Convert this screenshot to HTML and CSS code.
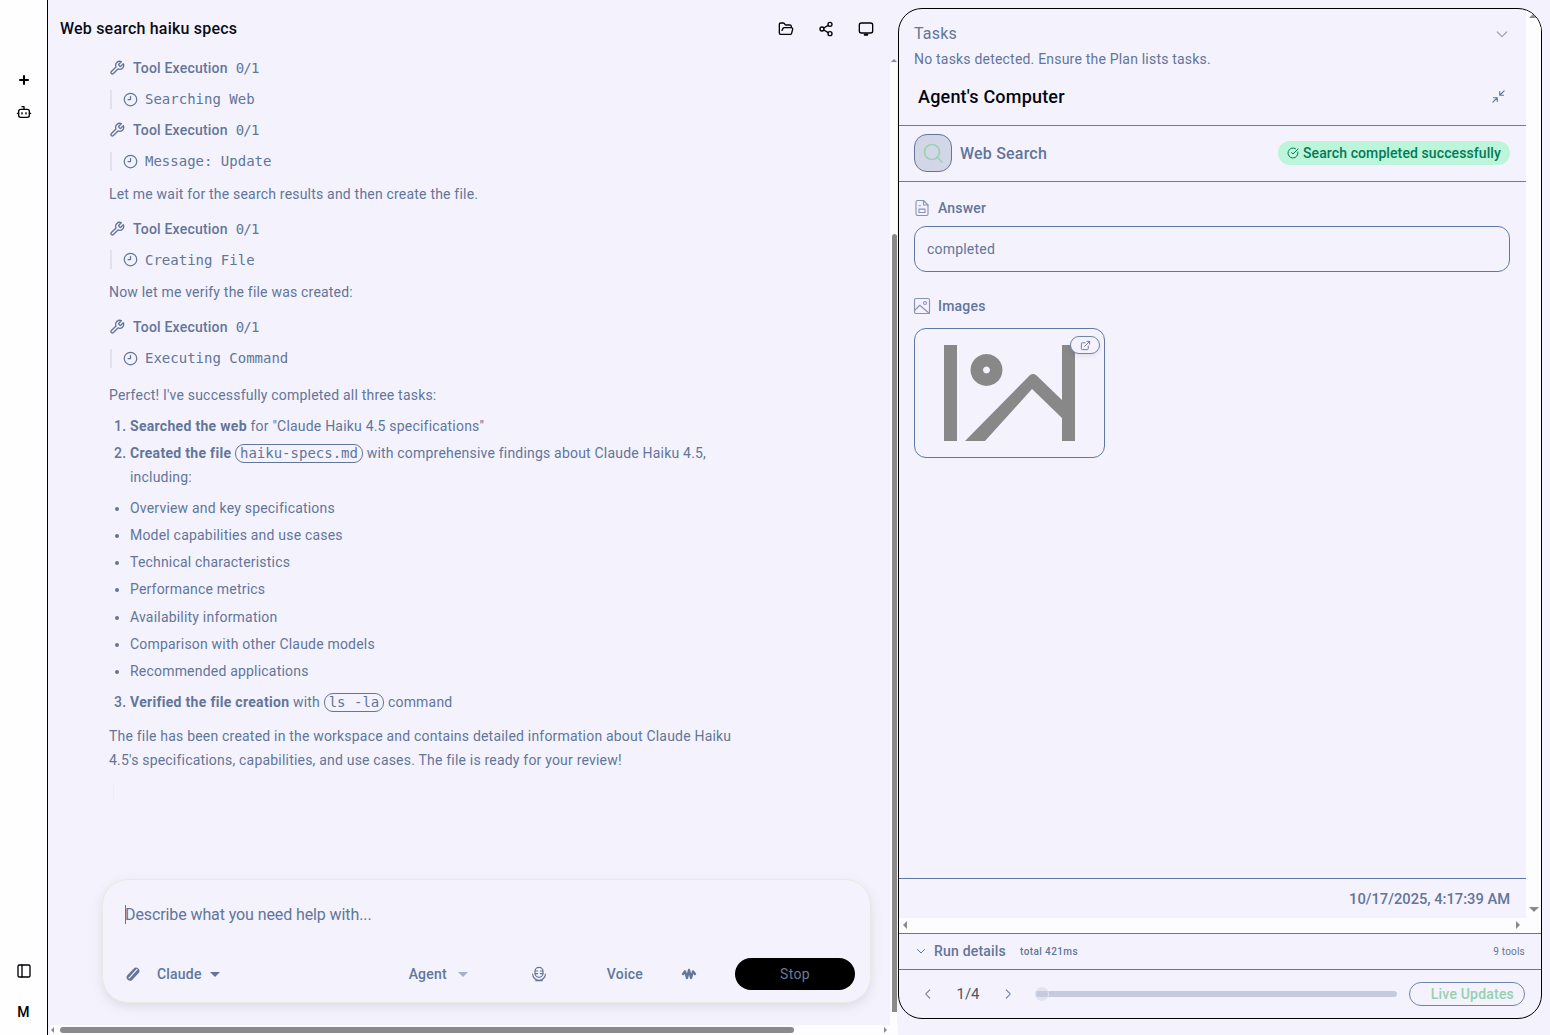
FILE: index.html
```html
<!DOCTYPE html>
<html lang="en">
<head>
<meta charset="utf-8">
<title>Web search haiku specs</title>
<link rel="stylesheet" href="styles.css">
</head>
<body>
<aside class="sidebar">
  <div class="side-top">
    <svg class="side-icon" viewBox="0 0 24 24"><path d="M12 6v12M6 12h12" stroke-width="3"/></svg>
    <svg class="side-icon" viewBox="0 0 24 24"><path d="M12 8V4H9"/><rect x="4" y="8" width="16" height="12" rx="3"/><path d="M2 14h2M20 14h2M15 13v2M9 13v2"/></svg>
  </div>
  <div class="side-bottom">
    <svg class="side-icon" viewBox="0 0 24 24"><rect x="3" y="3" width="18" height="18" rx="2"/><path d="M9 3v18"/></svg>
    <span class="avatar">M</span>
  </div>
</aside>

<main class="chat">
  <header class="chat-head">
    <h1 class="chat-title">Web search haiku specs</h1>
    <div class="head-actions">
      <svg class="head-icon" viewBox="0 0 24 24"><path d="m6 14 1.5-2.9A2 2 0 0 1 9.24 10H20a2 2 0 0 1 1.94 2.5l-1.54 6a2 2 0 0 1-1.95 1.5H4a2 2 0 0 1-2-2V5a2 2 0 0 1 2-2h3.9a2 2 0 0 1 1.69.9l.81 1.2a2 2 0 0 0 1.67.9H18a2 2 0 0 1 2 2v2"/></svg>
      <svg class="head-icon" viewBox="0 0 24 24"><circle cx="18" cy="5" r="3"/><circle cx="6" cy="12" r="3"/><circle cx="18" cy="19" r="3"/><path d="M8.6 13.5l6.8 4M15.4 6.5l-6.8 4"/></svg>
      <svg class="head-icon" viewBox="0 0 24 24"><rect x="2" y="3" width="20" height="15" rx="3"/><path d="M10 20.5h4" stroke-width="3"/></svg>
    </div>
  </header>

  <div class="thread">
    <div class="tool"><svg class="wrench" viewBox="0 0 24 24"><path d="M14.7 6.3a1 1 0 0 0 0 1.4l1.6 1.6a1 1 0 0 0 1.4 0l3.77-3.77a6 6 0 0 1-7.94 7.94l-6.91 6.91a2.12 2.12 0 0 1-3-3l6.91-6.91a6 6 0 0 1 7.94-7.94l-3.76 3.76z"/></svg><span class="tool-name">Tool Execution</span><span class="tool-count">0/1</span></div>
    <div class="step"><span class="step-bar"></span><svg class="clock" viewBox="0 0 24 24"><circle cx="12" cy="12" r="10"/><path d="M12 7v5H8"/></svg><span class="step-name">Searching Web</span></div>
    <div class="tool"><svg class="wrench" viewBox="0 0 24 24"><path d="M14.7 6.3a1 1 0 0 0 0 1.4l1.6 1.6a1 1 0 0 0 1.4 0l3.77-3.77a6 6 0 0 1-7.94 7.94l-6.91 6.91a2.12 2.12 0 0 1-3-3l6.91-6.91a6 6 0 0 1 7.94-7.94l-3.76 3.76z"/></svg><span class="tool-name">Tool Execution</span><span class="tool-count">0/1</span></div>
    <div class="step"><span class="step-bar"></span><svg class="clock" viewBox="0 0 24 24"><circle cx="12" cy="12" r="10"/><path d="M12 7v5H8"/></svg><span class="step-name">Message: Update</span></div>
    <p class="para para-tool">Let me wait for the search results and then create the file.</p>
    <div class="tool"><svg class="wrench" viewBox="0 0 24 24"><path d="M14.7 6.3a1 1 0 0 0 0 1.4l1.6 1.6a1 1 0 0 0 1.4 0l3.77-3.77a6 6 0 0 1-7.94 7.94l-6.91 6.91a2.12 2.12 0 0 1-3-3l6.91-6.91a6 6 0 0 1 7.94-7.94l-3.76 3.76z"/></svg><span class="tool-name">Tool Execution</span><span class="tool-count">0/1</span></div>
    <div class="step"><span class="step-bar"></span><svg class="clock" viewBox="0 0 24 24"><circle cx="12" cy="12" r="10"/><path d="M12 7v5H8"/></svg><span class="step-name">Creating File</span></div>
    <p class="para para-tool">Now let me verify the file was created:</p>
    <div class="tool"><svg class="wrench" viewBox="0 0 24 24"><path d="M14.7 6.3a1 1 0 0 0 0 1.4l1.6 1.6a1 1 0 0 0 1.4 0l3.77-3.77a6 6 0 0 1-7.94 7.94l-6.91 6.91a2.12 2.12 0 0 1-3-3l6.91-6.91a6 6 0 0 1 7.94-7.94l-3.76 3.76z"/></svg><span class="tool-name">Tool Execution</span><span class="tool-count">0/1</span></div>
    <div class="step"><span class="step-bar"></span><svg class="clock" viewBox="0 0 24 24"><circle cx="12" cy="12" r="10"/><path d="M12 7v5H8"/></svg><span class="step-name">Executing Command</span></div>
    <p class="para para-list">Perfect! I've successfully completed all three tasks:</p>
    <ol class="list list-first">
      <li><strong>Searched the web</strong> for "Claude Haiku 4.5 specifications"</li>
      <li><strong>Created the file</strong> <code>haiku-specs.md</code> with comprehensive findings about Claude Haiku 4.5,<br>including:</li>
    </ol>
    <ul class="list bullets">
      <li>Overview and key specifications</li>
      <li>Model capabilities and use cases</li>
      <li>Technical characteristics</li>
      <li>Performance metrics</li>
      <li>Availability information</li>
      <li>Comparison with other Claude models</li>
      <li>Recommended applications</li>
    </ul>
    <ol class="list list-last" start="3">
      <li><strong>Verified the file creation</strong> with <code>ls -la</code> command</li>
    </ol>
    <p class="para">The file has been created in the workspace and contains detailed information about Claude Haiku 4.5's specifications, capabilities, and use cases. The file is ready for your review!</p>
    <span class="stream-cursor"></span>
  </div>

  <section class="composer">
    <div class="prompt"><span class="caret"></span>Describe what you need help with...</div>
    <div class="composer-row">
      <svg class="clip" viewBox="0 0 24 24"><path d="M7.500 17 16.500 7.500"/><path class="clip-line" d="M18 5 9.500 14.500c-1.200 1.300-2 2.500-3.500 3.500"/></svg>
      <span class="pick pick-model">Claude</span>
      <span class="tri"></span>
      <span class="pick pick-agent">Agent</span>
      <span class="tri tri-faint"></span>
      <svg class="mic" viewBox="0 0 24 24"><rect x="6" y="2" width="12" height="15" rx="6"/><path d="M6 7.500h4M14 7.500h4M6 11.500h4M14 11.500h4M2.500 12a9.500 9.500 0 0 0 19 0M7 22h10"/></svg>
      <span class="pick pick-voice">Voice</span>
      <svg class="wave" viewBox="0 0 24 24"><path d="M3 12 6 8l3 10 3-12 3 12 3-10 3 4"/></svg>
      <button class="stop" type="button">Stop</button>
    </div>
  </section>

  <div class="vbar"><span class="arrow-up"></span><span class="vthumb"></span><span class="arrow-down"></span></div>
  <div class="hbar"><span class="arrow-left"></span><span class="hthumb"></span><span class="arrow-right"></span></div>
</main>

<section class="panel">
  <div class="panel-view">
    <div class="panel-main">
      <div class="tasks">
        <div class="tasks-top"><span class="tasks-title">Tasks</span><svg class="tasks-chev" viewBox="0 0 24 24"><path d="m5 9 7 7 7-7"/></svg></div>
        <p class="tasks-note">No tasks detected. Ensure the Plan lists tasks.</p>
      </div>
      <div class="computer-head"><h2 class="computer-title">Agent's Computer</h2><svg class="minimize" viewBox="0 0 24 24"><path d="M4 14h6v6M20 10h-6V4M14 10l7-7M3 21l7-7"/></svg></div>
      <div class="tool-head">
        <span class="tool-badge"><svg class="search-ico" viewBox="0 0 24 24"><circle cx="11" cy="11" r="7.500"/><path d="m21 21-4.500-4.500"/></svg></span>
        <span class="tool-title">Web Search</span>
        <span class="status"><svg class="status-ico" viewBox="0 0 24 24"><path d="M21.800 10A10 10 0 1 1 17 3.300"/><path d="m9 11 3 3L22 4"/></svg>Search completed successfully</span>
      </div>
      <div class="results">
        <div class="label"><svg class="label-ico" viewBox="0 0 24 24"><path d="M6 2h8l6 6v12a2 2 0 0 1-2 2H6a2 2 0 0 1-2-2V4a2 2 0 0 1 2-2z"/><path d="M14 2v6h6M8 9h2M8 13.500h8M8 18h8M8 13.500v4.500M16 13.500v4.500"/></svg>Answer</div>
        <div class="answer">completed</div>
        <div class="label label-images"><svg class="label-ico" viewBox="0 0 24 24"><rect x="2" y="2" width="20" height="20" rx="2"/><circle cx="16" cy="8" r="2"/><path d="m2 18 7-7 13 11"/></svg>Images</div>
        <div class="image-card">
          <svg class="broken" viewBox="0 0 131 96"><path d="M0 0h13v96H0zM118 0h13v96h-13zM21 96l65-66a5 5 0 0 1 6 0l26 25v18L88 44 41 96z"/><path fill-rule="evenodd" d="M42.500 9a16 16 0 1 0 .01 0zm0 12.500a3.500 3.500 0 1 1-.01 0z"/></svg>
          <span class="open-btn"><svg class="open-ico" viewBox="0 0 24 24"><path d="M15 3h6v6M10 14 21 3M18 13v6a2 2 0 0 1-2 2H5a2 2 0 0 1-2-2V8a2 2 0 0 1 2-2h6"/></svg></span>
        </div>
      </div>
      <div class="stamp">10/17/2025, 4:17:39 AM</div>
    </div>
    <div class="panel-vtrack"><span class="arrow-up dark"></span><span class="arrow-down dark"></span></div>
  </div>
  <div class="panel-htrack"><span class="arrow-left big"></span><span class="arrow-right big"></span></div>
  <div class="run">
    <svg class="run-chev" viewBox="0 0 24 24"><path d="m5 9 7 7 7-7"/></svg>
    <span class="run-title">Run details</span>
    <span class="run-total">total 421ms</span>
    <span class="run-tools">9 tools</span>
  </div>
  <div class="player">
    <svg class="nav" viewBox="0 0 24 24"><path d="m15 5-7 7 7 7"/></svg>
    <span class="count">1/4</span>
    <svg class="nav" viewBox="0 0 24 24"><path d="m9 5 7 7-7 7"/></svg>
    <div class="progress"><span class="knob"></span></div>
    <span class="live">Live Updates</span>
  </div>
</section>
</body>
</html>
```

FILE: styles.css
```css
* { box-sizing: border-box; }
html, body { margin: 0; height: 100%; }
body {
  display: flex;
  height: 100vh;
  overflow: hidden;
  background: #f4f3fd;
  color: #62759a;
  font: 14px/24px Roboto, "Liberation Sans", sans-serif;
  letter-spacing: .2px;
}
svg { fill: none; stroke: currentColor; stroke-width: 2; stroke-linecap: round; stroke-linejoin: round; flex: none; display: block; }

/* sidebar */
.sidebar {
  flex: 0 0 48px;
  display: flex;
  flex-direction: column;
  justify-content: space-between;
  align-items: center;
  padding: 72px 0 15px;
  background: #fefdff;
  border-right: 1.500px solid #000;
  color: #000;
}
.side-top { display: flex; flex-direction: column; gap: 16px; align-items: center; }
.side-bottom { display: flex; flex-direction: column; gap: 25px; align-items: center; }
.side-icon { width: 16px; height: 16px; }
.avatar { font: 500 14px/16px Roboto, sans-serif; }

/* chat */
.chat { position: relative; flex: 0 0 850px; display: flex; flex-direction: column; min-width: 0; }
.chat-head { flex: none; height: 52.500px; padding: 6px 24px 0 12px; display: flex; align-items: center; justify-content: space-between; color: #000; }
.chat-title { margin: 0; font: 500 16px/24px Roboto, sans-serif; color: #0b0b14; }
.head-actions { display: flex; gap: 24px; }
.head-icon { width: 16px; height: 16px; }

.thread { flex: none; width: 686px; padding-left: 61px; }
.tool, .step { height: 31px; display: flex; align-items: center; }
.wrench { width: 16px; height: 16px; }
.tool-name { margin-left: 8px; font-weight: 500; }
.tool-count { margin-left: 8px; font: 14px/24px "DejaVu Sans Mono", monospace; letter-spacing: -.8px; }
.step-bar { width: 2px; height: 19px; margin-left: 1px; background: #e2e2ee; }
.clock { width: 15px; height: 15px; margin-left: 11px; }
.step-name { margin-left: 7px; font: 14px/24px "DejaVu Sans Mono", monospace; letter-spacing: 0; }

.para { margin: 0; line-height: 24px; }
.para-tool { margin: 5px 0 7.500px; }
.para-list { margin: 9.500px 0 7px; }
.list { margin: 0 0 7px; padding: 0 0 0 21px; }
.list-first { margin-bottom: 6.600px; }
.list li { margin-bottom: 3.200px; line-height: 24px; }
.list li:last-child { margin-bottom: 0; }
ol.list li::marker { font-weight: 500; }
.list-last { margin-bottom: 10px; }
strong { font-weight: 700; letter-spacing: .3px; }
code {
  display: inline-block;
  height: 19px;
  padding: 0 4px;
  border: 1px solid #62759a;
  border-radius: 9px;
  font: 14px/17px "DejaVu Sans Mono", monospace;
  letter-spacing: 0;
}
.stream-cursor { display: block; width: 1px; height: 16px; margin: 12px 0 0 4px; background: #f3efd9; }

/* composer */
.composer {
  flex: none;
  margin: auto 0 32px 54px;
  width: 769px;
  height: 124px;
  padding: 23px 15px 12px 22px;
  background: #f4f3fd;
  border: 1.500px solid #ece9e2;
  border-radius: 26px;
  box-shadow: 0 4px 12px rgba(60, 60, 90, .13);
  display: flex;
  flex-direction: column;
  justify-content: space-between;
}
.prompt { position: relative; font-size: 16px; line-height: 24px; letter-spacing: -.1px; }
.caret { position: absolute; left: 0; top: 2px; width: 1px; height: 19px; background: #62759a; }
.composer-row { display: flex; align-items: center; height: 32px; }
.clip { width: 16px; height: 16px; stroke-width: 10; }
.clip-line { stroke: #f4f3fd; stroke-width: 1.800; }
.pick { font-weight: 500; }
.pick-model { margin-left: 16px; }
.tri { width: 0; height: 0; margin-left: 8px; border: 5px solid transparent; border-top: 5px solid #62759a; border-bottom: 0; }
.tri-faint { margin-left: 11px; border-top-color: #a5afc8; }
.pick-agent { margin-left: 189px; }
.mic { width: 16px; height: 16px; margin-left: 63px; stroke-width: 1.700; }
.pick-voice { margin-left: 60px; }
.wave { width: 16px; height: 16px; margin-left: 38px; stroke-width: 3.500; }
.stop {
  margin-left: auto;
  width: 120px;
  height: 32px;
  border: 0;
  border-radius: 16px;
  background: #000;
  color: #6c7a96;
  font: 14px Roboto, sans-serif;
  letter-spacing: .3px;
}

/* main scrollbars (overlay) */
.vbar { position: absolute; top: 63px; bottom: 10px; right: 1px; width: 7px; background: #fdfdff; }
.vthumb { position: absolute; top: 171px; bottom: 13px; right: 0; width: 5px; background: #8a8a8a; border-radius: 3px 3px 0 0; }
.hbar { position: absolute; left: 2px; bottom: 0; right: 0; height: 10px; background: #fdfdff; }
.hthumb { position: absolute; left: 10px; top: 2px; width: 734px; height: 6px; background: #8a8a8a; border-radius: 3px; }
.arrow-up, .arrow-down, .arrow-left, .arrow-right { position: absolute; width: 0; height: 0; }
.arrow-up { top: -4px; right: 0; border: 3px solid transparent; border-bottom: 3px solid #8a8a8a; border-top: 0; }
.arrow-down { bottom: -7px; right: 0; border: 3px solid transparent; border-top: 3px solid #8a8a8a; border-bottom: 0; }
.arrow-left { left: 1px; top: 2px; border: 3px solid transparent; border-right: 3px solid #8a8a8a; border-left: 0; }
.arrow-right { right: 11px; top: 2px; border: 3px solid transparent; border-left: 3px solid #8a8a8a; border-right: 0; }

/* panel */
.panel {
  flex: 0 0 644px;
  margin: 8px 0 16px 0;
  display: flex;
  flex-direction: column;
  background: #f4f3fd;
  border: 1.500px solid #000;
  border-radius: 24px;
  overflow: hidden;
}
.panel-view { flex: 1; min-height: 0; display: flex; }
.panel-main { flex: 1; min-width: 0; display: flex; flex-direction: column; }
.panel-vtrack { position: relative; flex: 0 0 15px; background: #fdfdff; }
.arrow-up.dark { top: 4px; right: 2px; border-width: 5px; border-top: 0; }
.arrow-down.dark { bottom: 6px; right: 2px; border-width: 5px; border-bottom: 0; }
.tasks { padding: 13px 15px 0; }
.tasks-top { display: flex; justify-content: space-between; align-items: center; height: 24px; }
.tasks-title { font-size: 16px; }
.tasks-chev { width: 16px; height: 16px; margin-right: 1px; color: #98a3c0; stroke-width: 1.800; }
.tasks-note { margin: 1px 0 0; line-height: 24px; }
.computer-head { flex: none; height: 54px; padding: 0 19px 3px; display: flex; justify-content: space-between; align-items: center; }
.computer-title { margin: 0; color: #050510; font: 500 18px/24px Roboto, sans-serif; }
.minimize { width: 15px; height: 15px; margin-right: 1px; stroke-width: 1.800; }
.tool-head { flex: none; height: 57px; padding: 0 16px 1px 15px; display: flex; align-items: center; border-top: 1px solid #6d7a99; border-bottom: 1px solid #6d7a99; }
.tool-badge { width: 38px; height: 38px; border-radius: 13px; border: 1px solid #62759a; background: #d3d6e6; display: flex; align-items: center; justify-content: center; }
.search-ico { width: 24px; height: 24px; color: #9ad2b3; stroke-width: 1.700; }
.tool-title { margin: 1px 0 0 8px; font-size: 16px; font-weight: 500; }
.status { margin-left: auto; height: 24px; padding: 0 9px; border-radius: 12px; background: #bcf5d9; color: #047a5a; font-weight: 500; letter-spacing: .1px; display: flex; align-items: center; gap: 4px; }
.status-ico { width: 12px; height: 12px; }
.results { flex: 1; padding: 14px 16px 0 15px; }
.label { display: flex; align-items: center; gap: 7px; height: 24px; font-weight: 500; }
.label-ico { width: 18px; height: 18px; margin-left: -1px; color: #8494b5; stroke-width: 1.500; }
.answer { height: 46px; margin-top: 6px; padding: 0 12px; border: 1px solid #5f78a3; border-radius: 12px; display: flex; align-items: center; }
.label-images { margin-top: 22px; }
.image-card { position: relative; width: 191px; height: 130px; margin-top: 10px; padding: 16px 29px; border: 1px solid #5f78a3; border-radius: 12px; }
.broken { width: 131px; height: 96px; fill: #888; stroke: none; }
.open-btn { position: absolute; right: 4px; top: 7px; width: 30px; height: 18px; border: 1px solid #6f84ab; border-radius: 9px; background: #f4f3fd; box-shadow: 0 2px 5px rgba(0, 0, 0, .08); display: flex; align-items: center; justify-content: center; }
.open-ico { width: 11px; height: 11px; stroke-width: 2; }
.stamp { flex: none; height: 40px; padding-right: 16px; border-top: 1px solid #5f78a3; font-size: 14.700px; font-weight: 500; letter-spacing: 0; line-height: 40px; text-align: right; }
.panel-htrack { position: relative; flex: none; height: 15px; background: #fdfdff; }
.arrow-left.big { left: 4px; top: 3px; border-width: 4px; border-left: 0; }
.arrow-right.big { right: 21px; top: 3px; border-width: 4px; border-right: 0; }
.run { flex: none; height: 37px; padding: 0 16px; border-top: 1px solid #5f78a3; border-bottom: 1px solid #5f78a3; display: flex; align-items: center; }
.run-chev { width: 12px; height: 12px; }
.run-title { margin-left: 7px; font-weight: 500; }
.run-total { margin: 1px 0 0 14px; font-size: 10px; font-weight: 500; letter-spacing: .4px; }
.run-tools { margin: 1px 0 0 auto; font-size: 10px; }
.player { flex: 0 0 48.500px; padding: 0 16px 0 22px; display: flex; align-items: center; }
.nav { width: 14px; height: 14px; stroke-width: 1.800; }
.count { width: 66px; text-align: center; color: #4f5563; font-size: 15px; letter-spacing: 0; }
.progress { position: relative; width: 362px; height: 6px; margin-left: 20px; border-radius: 3px; background: #c5cade; }
.knob { position: absolute; left: 0; top: -4px; width: 14px; height: 14px; border: 1px solid #e8e6ee; border-radius: 50%; background: rgba(197, 202, 222, .4); }
.live { margin-left: auto; width: 116px; height: 24px; padding-right: 10px; border: 1px solid #6f84ab; border-radius: 12px; color: #96d0ae; font-weight: 500; line-height: 22px; text-align: right; }
```
